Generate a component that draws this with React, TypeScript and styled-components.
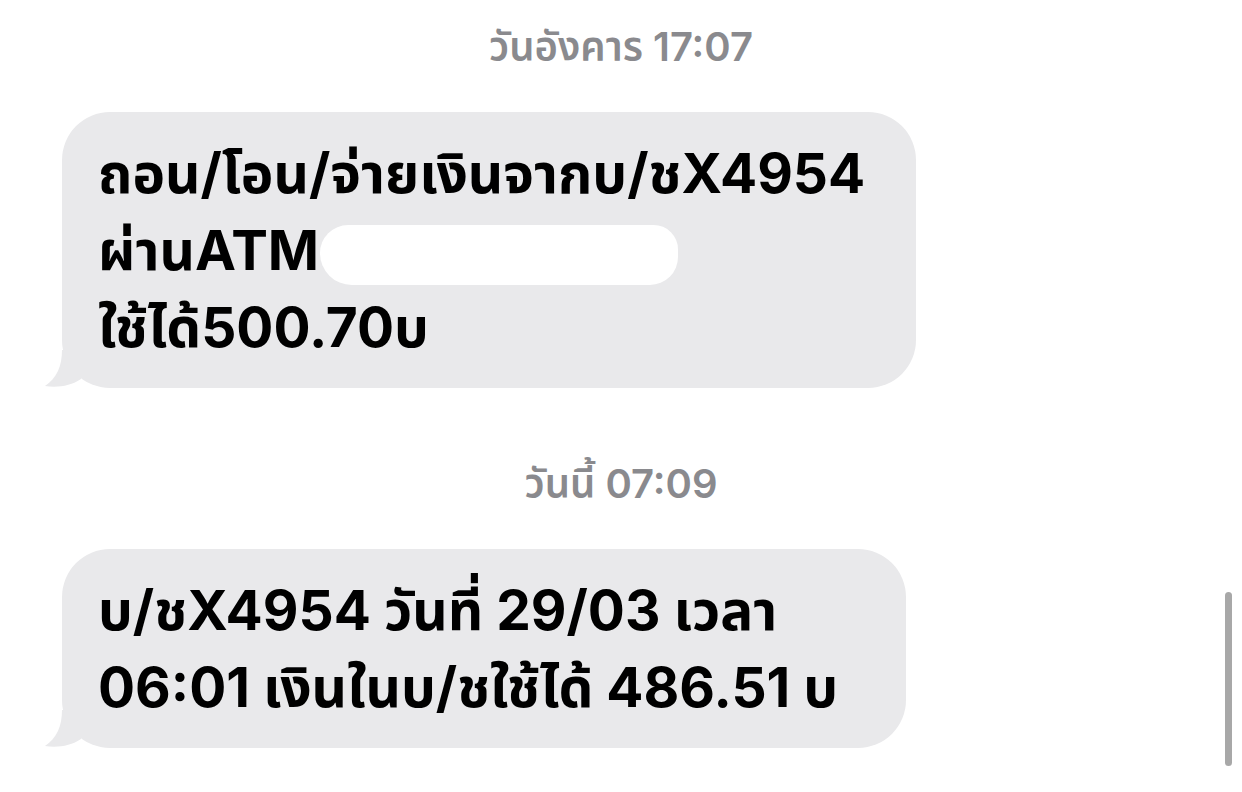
import React from "react";
import styled, { createGlobalStyle } from "styled-components";

const GlobalStyle = createGlobalStyle`
  html, body {
    margin: 0;
    padding: 0;
    background: #ffffff;
  }
  body {
    font-family: "Inter", "Noto Sans", "Noto Sans Thai", "Loma", "Garuda", sans-serif;
  }
`;

type Message = {
  stamp: string;
  width: number;
  lines: React.ReactNode[];
};

const messages: Message[] = [
  {
    stamp: "วันอังคาร 17:07",
    width: 854,
    lines: [
      "ถอน/โอน/จ่ายเงินจากบ/ชX4954",
      <>
        ผ่านATM<Redacted />
      </>,
      "ใช้ได้500.70บ",
    ],
  },
  {
    stamp: "วันนี้ 07:09",
    width: 844,
    lines: ["บ/ชX4954 วันที่ 29/03 เวลา", "06:01 เงินในบ/ชใช้ได้ 486.51 บ"],
  },
];

const App = () => {
  return (
    <>
      <GlobalStyle />
      <Thread>
        {messages.map((m) => (
          <Group key={m.stamp}>
            <Stamp>{m.stamp}</Stamp>
            <Row>
              <Bubble $width={m.width}>
                {m.lines.map((line, i) => (
                  <Line key={i}>{line}</Line>
                ))}
                <Tail viewBox="0 0 40 40" width="40" height="40">
                  <path d="M17 2 C17 18 12 30 0 38 C12 40 26 38 36 31 L36 2 Z" fill="#e9e9eb" />
                </Tail>
              </Bubble>
            </Row>
          </Group>
        ))}
      </Thread>
      <ScrollThumb />
    </>
  );
};

function Redacted() {
  return <Blot />;
}

const Thread = styled.div`
  display: flex;
  flex-direction: column;
  gap: 75px;
  padding: 26px 0 0 0;
  width: 1242px;
`;

const Group = styled.div`
  display: flex;
  flex-direction: column;
  gap: 44px;
`;

const Stamp = styled.div`
  text-align: center;
  color: #8a8a8e;
  font-size: 40px;
  font-weight: 600;
  line-height: 42px;
`;

const Row = styled.div`
  display: flex;
  padding-left: 62px;
`;

const Bubble = styled.div<{ $width: number }>`
  position: relative;
  width: ${(p) => p.$width}px;
  box-sizing: border-box;
  background: #e9e9eb;
  border-radius: 48px;
  padding: 23px 30px 22px 36px;
  color: #000;
  font-size: 55px;
  font-weight: 700;
  line-height: 77px;
`;

const Line = styled.div`
  white-space: nowrap;
`;

const Blot = styled.span`
  display: inline-block;
  width: 358px;
  height: 60px;
  margin-left: 1px;
  vertical-align: -15px;
  background: #ffffff;
  border-radius: 30px 26px 30px 34px;
`;

const Tail = styled.svg`
  position: absolute;
  left: -17px;
  bottom: 0;
`;

const ScrollThumb = styled.div`
  position: fixed;
  left: 1225px;
  top: 592px;
  width: 7px;
  height: 174px;
  border-radius: 4px;
  background: #a8a8a8;
`;

export default App;
